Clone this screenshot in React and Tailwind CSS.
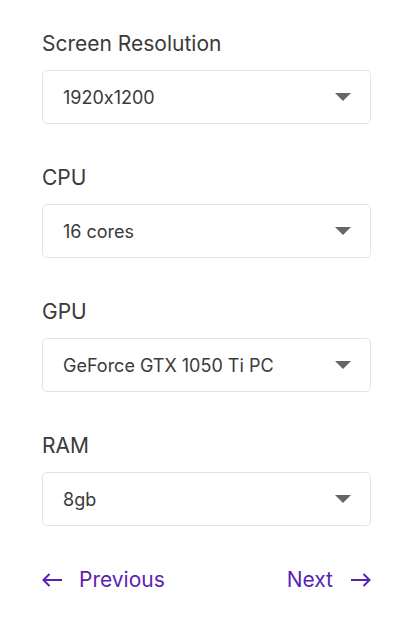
const fields = [
  { label: "Screen Resolution", value: "1920x1200" },
  { label: "CPU", value: "16 cores" },
  { label: "GPU", value: "GeForce GTX 1050 Ti PC" },
  { label: "RAM", value: "8gb" },
];

const Field = ({ label, value }) => (
  <div className="flex flex-col gap-3">
    <label className="text-[21px] leading-[28px] text-[#3a3a3a]">{label}</label>
    <div className="flex h-[54px] items-center justify-between rounded-[5px] border border-[#e3e3e3] bg-white pl-5 pr-[19px]">
      <span className="text-[18px] text-[#3a3a3a]">{value}</span>
      <svg width="16" height="8" viewBox="0 0 16 8" className="text-[#666]">
        <path d="M0 0h16L8 8z" fill="currentColor" />
      </svg>
    </div>
  </div>
);

const Arrow = ({ flip }) => (
  <svg
    width="20"
    height="14"
    viewBox="0 0 20 14"
    fill="none"
    stroke="currentColor"
    strokeWidth="2"
    className={flip ? "rotate-180" : ""}
  >
    <path d="M1 7h19M7.5 1 1.5 7l6 6" />
  </svg>
);

const App = () => {
  return (
    <div
      className="min-h-[620px] bg-white pl-[42px] pr-[37px] pt-[30px]"
      style={{ fontFamily: "Inter, 'Noto Sans', sans-serif", fontFeatureSettings: "'calt' 0" }}
    >
      <div className="flex flex-col gap-10">
        {fields.map((f) => (
          <Field key={f.label} label={f.label} value={f.value} />
        ))}
      </div>
      <div className="mt-10 flex items-center justify-between text-[#5b1fb5]">
        <button className="flex items-center gap-[17px] text-[21px] leading-[28px]">
          <Arrow />
          Previous
        </button>
        <button className="flex items-center gap-[18px] text-[21px] leading-[28px]">
          Next
          <Arrow flip />
        </button>
      </div>
    </div>
  );
};

export default App;
